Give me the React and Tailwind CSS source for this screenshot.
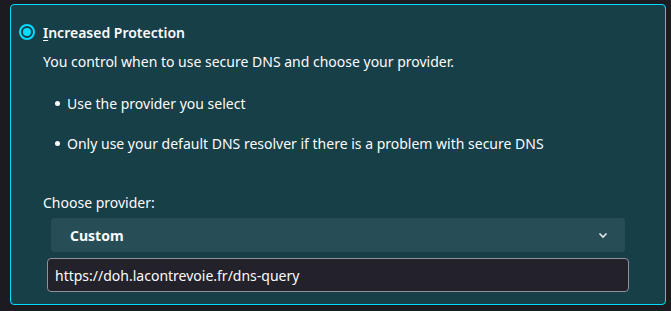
export default function App() {
  return (
    <div
      className="w-[671px] h-[311px] bg-[#1c1b22] pt-[4px] pl-[10px] text-[#fbfbfe] text-[14px]"
      style={{ fontFamily: '"Noto Sans", sans-serif' }}
    >
      <div className="w-[656px] h-[301px] rounded-[4px] border border-[#00ddff] bg-[#173f47] pl-[8px] pt-[14px]">
        <label className="flex items-center h-[26px]">
          <span className="w-[16px] h-[16px] rounded-full border-2 border-[#00ddff] flex items-center justify-center">
            <span className="w-[8px] h-[8px] rounded-full bg-[#00ddff]" />
          </span>
          <span className="ml-[8px] font-semibold">
            <span className="underline underline-offset-2">I</span>ncreased Protection
          </span>
        </label>

        <div className="pl-[24px]">
          <p className="mt-[3px] leading-[28px]">
            You control when to use secure DNS and choose your provider.
          </p>

          <ul className="mt-[13px] flex flex-col gap-[12px]">
            <li className="flex items-center h-[28px]">
              <span className="w-[5px] h-[5px] rounded-full bg-[#fbfbfe] ml-[12px] mr-[7px]" />
              Use the provider you select
            </li>
            <li className="flex items-center h-[28px]">
              <span className="w-[5px] h-[5px] rounded-full bg-[#fbfbfe] ml-[12px] mr-[7px]" />
              Only use your default DNS resolver if there is a problem with secure DNS
            </li>
          </ul>

          <p className="mt-[32px] leading-[28px]">Choose provider:</p>

          <div className="ml-[8px] mt-[1px] w-[574px] h-[34px] rounded-[4px] bg-[#274e56] flex items-center justify-between pl-[19px] pr-[16px]">
            <span className="font-bold">Custom</span>
            <svg width="12" height="12" viewBox="0 0 12 12" fill="none">
              <path d="M2.5 4.5 6 8l3.5-3.5" stroke="#e6e6ec" strokeWidth="1.6" />
            </svg>
          </div>

          <div className="ml-[4px] mt-[6px] w-[582px] h-[34px] rounded-[4px] border border-[#8f8f9d] bg-[#23222b] flex items-center pl-[7px]">
            https://doh.lacontrevoie.fr/dns-query
          </div>
        </div>
      </div>
    </div>
  );
}
